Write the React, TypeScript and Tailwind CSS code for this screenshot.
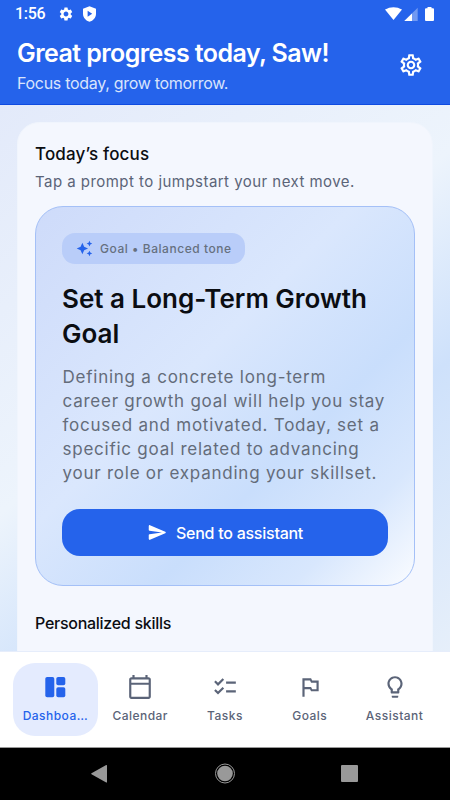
import type { ReactNode } from 'react'
import {
	MdAutoAwesome,
	MdChecklist,
	MdOutlineCalendarToday,
	MdOutlineLightbulb,
	MdOutlineSettings,
	MdOutlinedFlag,
	MdSettings,
} from 'react-icons/md'

const DashboardIcon = () => (
	<svg className="size-[26px]" viewBox="0 0 26 26" fill="currentColor">
		<rect x="3.300" y="3" width="9" height="20.300" rx="1.800" />
		<rect x="14.300" y="3" width="9" height="8.300" rx="1.800" />
		<rect x="14.300" y="13.300" width="9" height="10" rx="1.800" />
	</svg>
)

const TABS: { label: string, icon: ReactNode, active?: boolean }[] = [
	{ label: 'Dashboa…', icon: <DashboardIcon />, active: true },
	{ label: 'Calendar', icon: <MdOutlineCalendarToday className="size-[26px]" /> },
	{ label: 'Tasks', icon: <MdChecklist className="size-[26px]" /> },
	{ label: 'Goals', icon: <MdOutlinedFlag className="size-[26px]" /> },
	{ label: 'Assistant', icon: <MdOutlineLightbulb className="size-[26px]" /> },
]

const PROMPT_LINES: string[] = [
	'Defining a concrete long-term',
	'career growth goal will help you stay',
	'focused and motivated. Today, set a',
	'specific goal related to advancing',
	'your role or expanding your skillset.',
]

function StatusBar() {
	return (
		<div className="flex h-[26px] items-center pl-[15px] pr-[15px] pt-px text-white">
			<span className="w-[43px] font-[Roboto] text-[16px] leading-none font-medium tracking-[-0.3px]">1:56</span>
			<MdSettings className="size-[16px]" />
			<svg className="ml-[8px] h-[16px] w-[15px]" viewBox="0 0 15 16">
				<path d="M7.500.3 1 2.700v5C1 11.500 3.800 14.800 7.500 15.700 11.200 14.800 14 11.500 14 7.700v-5z" fill="#fff" />
				<path d="M5.600 4.800v6l4.600-3z" fill="#2563eb" />
			</svg>
			<svg className="ml-auto h-[14px] w-[50px]" viewBox="0 0 50 14">
				<path d="M0 2.600C5-.7 12-.7 17 2.600L8.500 13z" fill="#fff" />
				<path d="M19.300 14 32.700.8V14z" fill="#fff" fillOpacity=".35" />
				<path d="M19.300 14 27 6.400V14z" fill="#fff" />
				<path d="M42.500 0h4v1.300H48q1 0 1 1V13q0 1-1 1h-7q-1 0-1-1V2.300q0-1 1-1h1.500z" fill="#fff" />
			</svg>
		</div>
	)
}

function FocusCard() {
	return (
		<div className="mt-[14px] h-[380px] rounded-[28px] border border-[#a4c0f7] bg-[linear-gradient(135deg,#cedbfa_0%,#dae7fd_42%,#c9defc_66%,#d8e7fd_84%,#fafcff_100%)] px-[26px] pt-[26px]">
			<div className="flex h-[31px] w-[183px] items-center rounded-[13px] bg-[#b9cdf9] pl-[14px]">
				<MdAutoAwesome className="size-[17px] text-[#2563eb]" />
				<span className="ml-[7px] text-[12px] font-medium tracking-[0.54px] whitespace-nowrap text-[#66707f]">Goal • Balanced tone</span>
			</div>
			<h2 className="mt-[17px] text-[26px] leading-[35px] font-semibold whitespace-nowrap text-[#0b0d12]">
				Set a Long-Term Growth<br />Goal
			</h2>
			<p className="mt-[14px] pl-[0.5px] text-[17px] leading-[24px] tracking-[0.76px] whitespace-nowrap text-[#646c7a]">
				{PROMPT_LINES.map((line) => (
					<span key={line} className="block">{line}</span>
				))}
			</p>
			<button className="mt-[24px] flex h-[47px] w-[326px] items-center justify-center gap-[8px] rounded-[18px] bg-[#2563eb] text-white">
				<svg className="size-[21px]" viewBox="0 0 24 24" fill="currentColor">
					<path d="M3.400 20.400l17.450-7.480c.81-.35.81-1.490 0-1.840L3.400 3.600c-.66-.29-1.390.2-1.390.91L2 9.120c0 .5.37.93.87.99L17 12 2.870 13.880c-.5.07-.87.5-.87 1l.01 4.610c0 .71.73 1.200 1.390.91z" />
				</svg>
				<span className="text-[16px] font-medium tracking-[-0.25px]">Send to assistant</span>
			</button>
		</div>
	)
}

function NavBar() {
	return (
		<nav className="flex h-[96px] border-t border-[#e6edfb] bg-white px-[13px] pt-[11px]">
			{TABS.map(({ label, icon, active }) => (
				<div
					key={label}
					className={`flex h-[73px] w-[84.8px] shrink-0 flex-col items-center rounded-[22px] pt-[11px] ${active ? 'bg-[#e4ebfe] text-[#2563eb]' : 'text-[#5b6478]'}`}
				>
					{icon}
					<span className="mt-[7px] text-[12px] leading-[18px] font-medium tracking-[0.48px] whitespace-nowrap">{label}</span>
				</div>
			))}
		</nav>
	)
}

export default function App() {
	return (
		<main className="flex h-[800px] w-[450px] flex-col overflow-hidden font-[Inter,sans-serif]">
			<header className="h-[105px] border-b border-[#0f4be0] bg-[#2563eb] text-white">
				<StatusBar />
				<div className="flex justify-between pl-[17px] pr-[26px]">
					<div>
						<h1 className="mt-[11px] text-[25px] leading-[32px] font-semibold tracking-[-0.57px] whitespace-nowrap">Great progress today, Saw!</h1>
						<p className="mt-[3px] text-[16px] leading-[22px] tracking-[-0.3px] whitespace-nowrap text-[#d9e4fc]">Focus today, grow tomorrow.</p>
					</div>
					<MdOutlineSettings className="mt-[26px] size-[26px]" />
				</div>
			</header>

			<section className="h-[546px] shrink-0 overflow-hidden bg-[linear-gradient(141deg,#e3eafa_0%,#edf4fc_45%,#cee1fb_68%,#e6effa_100%)] px-[17px] pt-[17px]">
				<div className="h-[560px] rounded-[22px] border border-[#f0f5fd] bg-[#f4f7fe] px-[17px] pt-[18px]">
					<h3 className="mt-px text-[17px] leading-[24px] font-medium tracking-[0.15px] whitespace-nowrap text-[#0b0d12]">Today’s focus</h3>
					<p className="mt-[6px] text-[15px] leading-[20px] tracking-[0.46px] whitespace-nowrap text-[#5b6478]">Tap a prompt to jumpstart your next move.</p>
					<FocusCard />
					<h3 className="mt-[26px] text-[16px] leading-[22px] font-medium tracking-[-0.28px] whitespace-nowrap text-[#0b0d12]">Personalized skills</h3>
				</div>
			</section>

			<NavBar />

			<footer className="h-[53px] border-t border-[#999] bg-black">
				<svg className="h-[52px] w-[450px]" viewBox="0 748 450 52">
					<path d="M107 765.500v16.500q0 .8-.8.500L91.500 774.300q-.7-.5 0-1L106.200 765q.8-.3.800.5z" fill="#999" />
					<circle cx="225" cy="773.500" r="9.500" fill="none" stroke="#999" strokeWidth="1" />
					<circle cx="225" cy="773.500" r="7.800" fill="#999" />
					<rect x="341" y="765" width="17" height="17" rx="1" fill="#999" />
				</svg>
			</footer>
		</main>
	)
}
